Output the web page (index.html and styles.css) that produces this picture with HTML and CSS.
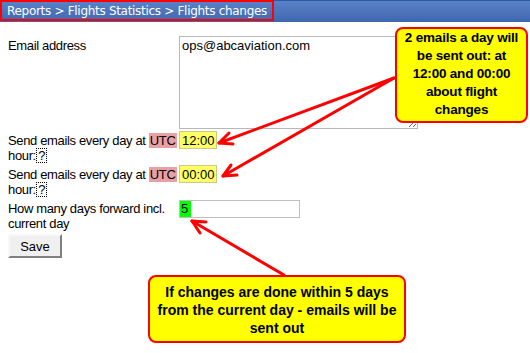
FILE: index.html
```html
<!DOCTYPE html>
<html lang="en">
<head>
    <meta charset="UTF-8">
    <title>Flights changes</title>
    <link rel="stylesheet" href="styles.css">
</head>
<body>
    <div class="topbar">
        <span class="crumbs">Reports &gt; Flights Statistics &gt; Flights changes</span>
    </div>

    <div class="settings">
        <div class="row">
            <label class="label">Email address</label>
            <textarea class="emails">ops@abcaviation.com</textarea>
        </div>
        <div class="row">
            <label class="label">Send emails every day at <span class="utc">UTC</span> hour: <span class="hint">?</span></label>
            <input class="time" type="text" value="12:00">
        </div>
        <div class="row">
            <label class="label">Send emails every day at <span class="utc">UTC</span> hour: <span class="hint">?</span></label>
            <input class="time" type="text" value="00:00">
        </div>
        <div class="row">
            <label class="label">How many days forward incl. current day</label>
            <div class="days"><span class="days-value">5</span></div>
        </div>
        <button class="save">Save</button>
    </div>

    <!-- annotations -->
    <svg class="arrows" width="530" height="353" viewBox="0 0 530 353">
        <g fill="none" stroke="#ff0000" stroke-width="3" stroke-linecap="round" stroke-linejoin="round">
            <line x1="394" y1="78" x2="219" y2="143"/>
            <polyline points="229,133 219,143 233,144"/>
            <line x1="394" y1="78" x2="223" y2="176"/>
            <polyline points="231,165 223,176 237,175"/>
            <line x1="284" y1="275" x2="192" y2="221"/>
            <polyline points="200,233 192,221 206,222"/>
        </g>
    </svg>
    <div class="callout callout-times">2 emails a day will be sent out: at 12:00 and 00:00 about flight changes</div>
    <div class="callout callout-days">If changes are done within 5 days from the current day - emails will be sent out</div>
</body>
</html>
```

FILE: styles.css
```css
body {
    margin: 0;
    font-family: "Liberation Sans", Arial, sans-serif;
    font-size: 13px;
    color: #000;
    background: #fff;
    position: relative;
    width: 530px;
    height: 353px;
    overflow: hidden;
}
.topbar {
    height: 22px;
    background: linear-gradient(#5b82c6, #3f67b0);
    border-top: 1px solid #2a5aa6;
    box-sizing: border-box;
}
.crumbs {
    display: inline-block;
    height: 21px;
    box-sizing: border-box;
    margin-top: -1px;
    padding: 1px 5px 0 5px;
    border: 2px solid #ff0000;
    color: #fff;
    font-family: "DejaVu Sans", Tahoma, sans-serif;
    font-size: 12px;
    letter-spacing: -0.3px;
    line-height: 16px;
}
.settings {
    padding: 14px 8px 0;
}
.row {
    display: grid;
    grid-template-columns: 171px 1fr;
    align-items: start;
    margin-bottom: 2px;
}
.label {
    line-height: 15px;
    padding-top: 2px;
    letter-spacing: -0.35px;
}
.utc {
    background: #e8a0a4;
    padding: 0 1px;
}
.hint {
    display: inline-block;
    border: 1px dotted #000;
    line-height: 13px;
    padding: 0 1px;
    margin-left: -3px;
}
.emails {
    width: 239px;
    height: 93px;
    box-sizing: border-box;
    margin: 0;
    padding: 1px 2px;
    border: 1px solid #b8b8b8;
    font-family: "Liberation Sans", Arial, sans-serif;
    font-size: 13px;
    resize: both;
}
.time {
    width: 38px;
    height: 18px;
    box-sizing: border-box;
    margin: 0;
    padding: 0 0 0 2px;
    border: 1px solid #c9c98a;
    background: #ffff66;
    font-family: "Liberation Sans", Arial, sans-serif;
    font-size: 13px;
}
.days {
    width: 121px;
    height: 18px;
    box-sizing: border-box;
    margin-top: 1px;
    border: 1px solid #c0c0c0;
    line-height: 16px;
}
.days-value {
    display: inline-block;
    background: #00ff00;
    padding: 0 3px 0 1px;
}
.save {
    margin-top: 1px;
    width: 54px;
    height: 24px;
    background: #f0f0f0;
    border: 2px solid;
    border-color: #f8f8f8 #808080 #808080 #f8f8f8;
    font-family: "Liberation Sans", Arial, sans-serif;
    font-size: 13px;
    padding: 0;
}
.arrows {
    position: absolute;
    left: 0;
    top: 0;
    pointer-events: none;
}
.callout {
    position: absolute;
    box-sizing: border-box;
    background: #ffff00;
    border: 2px solid #ff0000;
    border-radius: 8px;
    font-weight: bold;
    font-size: 14px;
    line-height: 18px;
    text-align: center;
    color: #000;
}
.callout-times {
    left: 395px;
    top: 27px;
    width: 133px;
    height: 96px;
    padding: 0 2px;
    font-size: 13.5px;
    letter-spacing: -0.2px;
}
.callout-days {
    left: 148px;
    top: 275px;
    width: 258px;
    height: 68px;
    padding: 6px 4px 0;
}
```
